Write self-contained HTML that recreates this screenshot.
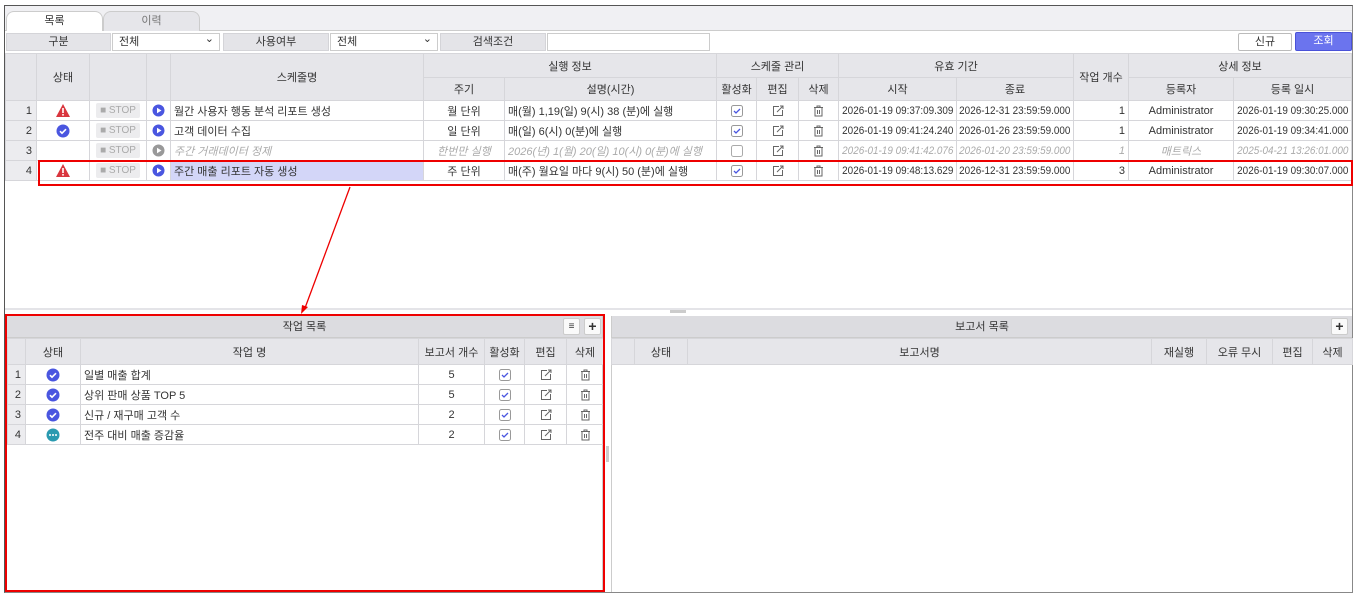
<!DOCTYPE html>
<html><head><meta charset="utf-8"><style>
*{box-sizing:border-box;margin:0;padding:0}
body{width:1355px;height:595px;background:#fff;font-family:"Liberation Sans","Noto Sans CJK KR",sans-serif;font-size:11px;color:#333;position:relative;overflow:hidden}
.a{position:absolute}
.frame{left:4px;top:5px;width:1349px;height:588px;border:1px solid #555;border-right:1px solid #888;border-bottom:1px solid #888;background:#fff}
.tabbar{left:5px;top:6px;width:1347px;height:25px;background:#f0f0f3;border-bottom:1px solid #ccc}
.tab{top:11px;height:20px;border:1px solid #ccc;border-bottom:none;border-radius:8px 8px 0 0;text-align:center;line-height:18px;font-size:11px}
.lbl{top:33px;height:18px;background:#e4e4e8;border:1px solid #d4d4d8;text-align:center;line-height:16px;font-size:11px}
.sel{top:33px;height:18px;border:1px solid #ccc;background:#fff;line-height:16px;padding-left:6px;font-size:11px}
.dd:after{content:"⌄";position:absolute;right:5px;top:-3px;font-size:11px}
table{border-collapse:collapse;table-layout:fixed;position:absolute}
td,th{border:1px solid #d6d6da;height:20px;font-size:11px;font-weight:normal;white-space:nowrap;overflow:hidden;text-align:center;padding:0 3px}
th{background:#e6e6ea;color:#333}
td.l{text-align:left}
td.r{text-align:right}
td.n{background:#ececef;text-align:right;padding-right:4px}
td.d{padding:0;text-align:center}
td.d span{display:inline-block;transform:scaleX(0.9);transform-origin:center;margin:0 -10px}
.g td{color:#aaa;font-style:italic}
.stop{display:inline-block;width:44px;height:15px;background:#ececee;color:#aaa;font-size:10px;line-height:15px;border-radius:2px}
svg{vertical-align:middle}
.ptitle{height:22px;background:#dcdce0;text-align:center;line-height:22px;font-size:11px;border-bottom:1px solid #ccc}
.ib{width:17px;height:17px;border:1px solid #ccc;background:#fafafa;border-radius:2px;font-size:14px;line-height:15px;text-align:center;font-weight:bold}
</style></head><body>
<div class="a frame"></div>
<div class="a tabbar"></div>
<div class="a tab" style="left:6px;width:97px;background:#fff">목록</div>
<div class="a tab" style="left:103px;width:97px;background:#e6e6ea;color:#777">이력</div>
<div class="a lbl" style="left:6px;width:105px">구분</div>
<div class="a sel dd" style="left:112px;width:108px">전체</div>
<div class="a lbl" style="left:223px;width:106px">사용여부</div>
<div class="a sel dd" style="left:330px;width:108px">전체</div>
<div class="a lbl" style="left:440px;width:106px">검색조건</div>
<div class="a sel" style="left:547px;width:163px;padding:0"></div>
<div class="a" style="left:1238px;top:33px;width:54px;height:18px;border:1px solid #bbb;border-radius:2px;background:#fff;text-align:center;line-height:16px">신규</div>
<div class="a" style="left:1295px;top:32px;width:57px;height:19px;border:1px solid #4a52d8;border-radius:2px;background:#6b74ee;color:#fff;text-align:center;line-height:17px">조회</div>

<table style="left:5px;top:53px;width:1346px">
<colgroup><col style="width:31px"><col style="width:53px"><col style="width:57px"><col style="width:24px"><col style="width:253px"><col style="width:81px"><col style="width:212px"><col style="width:40px"><col style="width:42px"><col style="width:40px"><col style="width:118px"><col style="width:117px"><col style="width:55px"><col style="width:105px"><col style="width:118px"></colgroup>
<tr style="height:24px"><th rowspan="2"></th><th rowspan="2">상태</th><th rowspan="2"></th><th rowspan="2"></th><th rowspan="2">스케줄명</th><th colspan="2">실행 정보</th><th colspan="3">스케줄 관리</th><th colspan="2">유효 기간</th><th rowspan="2">작업 개수</th><th colspan="2">상세 정보</th></tr>
<tr style="height:23px"><th>주기</th><th>설명(시간)</th><th>활성화</th><th>편집</th><th>삭제</th><th>시작</th><th>종료</th><th>등록자</th><th>등록 일시</th></tr>
<tr><td class="n">1</td><td><svg width="16" height="15" viewBox="0 0 16 15"><path d="M8 1L15 14H1Z" fill="#d9363e"/><rect x="7.2" y="5" width="1.6" height="5" fill="#fff"/><rect x="7.2" y="11" width="1.6" height="1.6" fill="#fff"/></svg></td><td><span class="stop">■ STOP</span></td><td><svg width="13" height="13"><circle cx="6.5" cy="6.5" r="6" fill="#4a56e0"/><path d="M5 3.8L9.5 6.5L5 9.2Z" fill="#fff"/></svg></td><td class="l">월간 사용자 행동 분석 리포트 생성</td><td>월 단위</td><td class="l">매(월) 1,19(일) 9(시) 38 (분)에 실행</td><td><svg width="12" height="12"><rect x=".5" y=".5" width="11" height="11" rx="2" fill="#fff" stroke="#999"/><path d="M3 6l2 2l4-4" stroke="#4a56e0" fill="none" stroke-width="1.3"/></svg></td><td><svg width="12" height="12"><path d="M7 1.5H1.5V10.5H10.5V5" stroke="#666" fill="none"/><path d="M5 7L11 1M8 1H11V4" stroke="#666" fill="none"/></svg></td><td><svg width="11" height="12"><path d="M1 2.5H10M4 2.5V1H7V2.5M2 3V11H9V3M4.5 5V9M6.5 5V9" stroke="#666" fill="none"/></svg></td><td class="d"><span>2026-01-19 09:37:09.309</span></td><td class="d"><span>2026-12-31 23:59:59.000</span></td><td class="r">1</td><td>Administrator</td><td class="d"><span>2026-01-19 09:30:25.000</span></td></tr>
<tr><td class="n">2</td><td><svg width="14" height="14"><circle cx="7" cy="7" r="6.5" fill="#4a56e0"/><path d="M4 7.2l2 2l4-4" stroke="#fff" fill="none" stroke-width="1.6"/></svg></td><td><span class="stop">■ STOP</span></td><td><svg width="13" height="13"><circle cx="6.5" cy="6.5" r="6" fill="#4a56e0"/><path d="M5 3.8L9.5 6.5L5 9.2Z" fill="#fff"/></svg></td><td class="l">고객 데이터 수집</td><td>일 단위</td><td class="l">매(일) 6(시) 0(분)에 실행</td><td><svg width="12" height="12"><rect x=".5" y=".5" width="11" height="11" rx="2" fill="#fff" stroke="#999"/><path d="M3 6l2 2l4-4" stroke="#4a56e0" fill="none" stroke-width="1.3"/></svg></td><td><svg width="12" height="12"><path d="M7 1.5H1.5V10.5H10.5V5" stroke="#666" fill="none"/><path d="M5 7L11 1M8 1H11V4" stroke="#666" fill="none"/></svg></td><td><svg width="11" height="12"><path d="M1 2.5H10M4 2.5V1H7V2.5M2 3V11H9V3M4.5 5V9M6.5 5V9" stroke="#666" fill="none"/></svg></td><td class="d"><span>2026-01-19 09:41:24.240</span></td><td class="d"><span>2026-01-26 23:59:59.000</span></td><td class="r">1</td><td>Administrator</td><td class="d"><span>2026-01-19 09:34:41.000</span></td></tr>
<tr class="g"><td class="n" style="font-style:normal;color:#333">3</td><td></td><td><span class="stop" style="font-style:normal">■ STOP</span></td><td><svg width="13" height="13"><circle cx="6.5" cy="6.5" r="6" fill="#999"/><path d="M5 3.8L9.5 6.5L5 9.2Z" fill="#fff"/></svg></td><td class="l">주간 거래데이터 정제</td><td>한번만 실행</td><td class="l">2026(년) 1(월) 20(일) 10(시) 0(분)에 실행</td><td><svg width="12" height="12"><rect x=".5" y=".5" width="11" height="11" rx="2" fill="#fff" stroke="#aaa"/></svg></td><td><svg width="12" height="12"><path d="M7 1.5H1.5V10.5H10.5V5" stroke="#666" fill="none"/><path d="M5 7L11 1M8 1H11V4" stroke="#666" fill="none"/></svg></td><td><svg width="11" height="12"><path d="M1 2.5H10M4 2.5V1H7V2.5M2 3V11H9V3M4.5 5V9M6.5 5V9" stroke="#666" fill="none"/></svg></td><td class="d"><span>2026-01-19 09:41:42.076</span></td><td class="d"><span>2026-01-20 23:59:59.000</span></td><td class="r">1</td><td>매트릭스</td><td class="d"><span>2025-04-21 13:26:01.000</span></td></tr>
<tr><td class="n">4</td><td><svg width="16" height="15" viewBox="0 0 16 15"><path d="M8 1L15 14H1Z" fill="#d9363e"/><rect x="7.2" y="5" width="1.6" height="5" fill="#fff"/><rect x="7.2" y="11" width="1.6" height="1.6" fill="#fff"/></svg></td><td><span class="stop">■ STOP</span></td><td><svg width="13" height="13"><circle cx="6.5" cy="6.5" r="6" fill="#4a56e0"/><path d="M5 3.8L9.5 6.5L5 9.2Z" fill="#fff"/></svg></td><td class="l" style="background:#d3d6f8">주간 매출 리포트 자동 생성</td><td>주 단위</td><td class="l">매(주) 월요일 마다 9(시) 50 (분)에 실행</td><td><svg width="12" height="12"><rect x=".5" y=".5" width="11" height="11" rx="2" fill="#fff" stroke="#999"/><path d="M3 6l2 2l4-4" stroke="#4a56e0" fill="none" stroke-width="1.3"/></svg></td><td><svg width="12" height="12"><path d="M7 1.5H1.5V10.5H10.5V5" stroke="#666" fill="none"/><path d="M5 7L11 1M8 1H11V4" stroke="#666" fill="none"/></svg></td><td><svg width="11" height="12"><path d="M1 2.5H10M4 2.5V1H7V2.5M2 3V11H9V3M4.5 5V9M6.5 5V9" stroke="#666" fill="none"/></svg></td><td class="d"><span>2026-01-19 09:48:13.629</span></td><td class="d"><span>2026-12-31 23:59:59.000</span></td><td class="r">3</td><td>Administrator</td><td class="d"><span>2026-01-19 09:30:07.000</span></td></tr>
</table>
<div class="a" style="left:38px;top:160px;width:1315px;height:26px;border:2px solid #e00"></div>

<div class="a" style="left:5px;top:308px;width:1347px;height:2px;background:#e4e4e8"></div>
<div class="a" style="left:670px;top:310px;width:16px;height:3px;background:#ccc"></div>

<div class="a" style="left:7px;top:316px;width:596px;height:274px;border-right:1px solid #ccc">
<div class="ptitle">작업 목록</div>
</div>
<div class="a ib" style="left:563px;top:318px;font-size:10px">≡</div>
<div class="a ib" style="left:584px;top:318px">+</div>
<table style="left:7px;top:338px;width:596px">
<colgroup><col style="width:18px"><col style="width:55px"><col style="width:338px"><col style="width:66px"><col style="width:40px"><col style="width:42px"><col style="width:37px"></colgroup>
<tr style="height:26px"><th></th><th>상태</th><th>작업 명</th><th>보고서 개수</th><th>활성화</th><th>편집</th><th>삭제</th></tr>
<tr><td class="n">1</td><td><svg width="14" height="14"><circle cx="7" cy="7" r="6.5" fill="#4a56e0"/><path d="M4 7.2l2 2l4-4" stroke="#fff" fill="none" stroke-width="1.6"/></svg></td><td class="l">일별 매출 합계</td><td>5</td><td><svg width="12" height="12"><rect x=".5" y=".5" width="11" height="11" rx="2" fill="#fff" stroke="#999"/><path d="M3 6l2 2l4-4" stroke="#4a56e0" fill="none" stroke-width="1.3"/></svg></td><td><svg width="12" height="12"><path d="M7 1.5H1.5V10.5H10.5V5" stroke="#666" fill="none"/><path d="M5 7L11 1M8 1H11V4" stroke="#666" fill="none"/></svg></td><td><svg width="11" height="12"><path d="M1 2.5H10M4 2.5V1H7V2.5M2 3V11H9V3M4.5 5V9M6.5 5V9" stroke="#666" fill="none"/></svg></td></tr>
<tr><td class="n">2</td><td><svg width="14" height="14"><circle cx="7" cy="7" r="6.5" fill="#4a56e0"/><path d="M4 7.2l2 2l4-4" stroke="#fff" fill="none" stroke-width="1.6"/></svg></td><td class="l">상위 판매 상품 TOP 5</td><td>5</td><td><svg width="12" height="12"><rect x=".5" y=".5" width="11" height="11" rx="2" fill="#fff" stroke="#999"/><path d="M3 6l2 2l4-4" stroke="#4a56e0" fill="none" stroke-width="1.3"/></svg></td><td><svg width="12" height="12"><path d="M7 1.5H1.5V10.5H10.5V5" stroke="#666" fill="none"/><path d="M5 7L11 1M8 1H11V4" stroke="#666" fill="none"/></svg></td><td><svg width="11" height="12"><path d="M1 2.5H10M4 2.5V1H7V2.5M2 3V11H9V3M4.5 5V9M6.5 5V9" stroke="#666" fill="none"/></svg></td></tr>
<tr><td class="n">3</td><td><svg width="14" height="14"><circle cx="7" cy="7" r="6.5" fill="#4a56e0"/><path d="M4 7.2l2 2l4-4" stroke="#fff" fill="none" stroke-width="1.6"/></svg></td><td class="l">신규 / 재구매 고객 수</td><td>2</td><td><svg width="12" height="12"><rect x=".5" y=".5" width="11" height="11" rx="2" fill="#fff" stroke="#999"/><path d="M3 6l2 2l4-4" stroke="#4a56e0" fill="none" stroke-width="1.3"/></svg></td><td><svg width="12" height="12"><path d="M7 1.5H1.5V10.5H10.5V5" stroke="#666" fill="none"/><path d="M5 7L11 1M8 1H11V4" stroke="#666" fill="none"/></svg></td><td><svg width="11" height="12"><path d="M1 2.5H10M4 2.5V1H7V2.5M2 3V11H9V3M4.5 5V9M6.5 5V9" stroke="#666" fill="none"/></svg></td></tr>
<tr><td class="n">4</td><td><svg width="14" height="14"><circle cx="7" cy="7" r="6.5" fill="#2a9ab0"/><circle cx="4" cy="7" r="1" fill="#fff"/><circle cx="7" cy="7" r="1" fill="#fff"/><circle cx="10" cy="7" r="1" fill="#fff"/></svg></td><td class="l">전주 대비 매출 증감율</td><td>2</td><td><svg width="12" height="12"><rect x=".5" y=".5" width="11" height="11" rx="2" fill="#fff" stroke="#999"/><path d="M3 6l2 2l4-4" stroke="#4a56e0" fill="none" stroke-width="1.3"/></svg></td><td><svg width="12" height="12"><path d="M7 1.5H1.5V10.5H10.5V5" stroke="#666" fill="none"/><path d="M5 7L11 1M8 1H11V4" stroke="#666" fill="none"/></svg></td><td><svg width="11" height="12"><path d="M1 2.5H10M4 2.5V1H7V2.5M2 3V11H9V3M4.5 5V9M6.5 5V9" stroke="#666" fill="none"/></svg></td></tr>
</table>
<div class="a" style="left:5px;top:314px;width:600px;height:278px;border:2px solid #e00"></div>
<div class="a" style="left:606px;top:446px;width:3px;height:16px;background:#ccc"></div>

<div class="a" style="left:611px;top:316px;width:741px;height:276px;border-left:1px solid #ccc">
<div class="ptitle">보고서 목록</div>
</div>
<div class="a ib" style="left:1331px;top:318px">+</div>
<table style="left:611px;top:338px;width:741px">
<colgroup><col style="width:23px"><col style="width:53px"><col style="width:464px"><col style="width:55px"><col style="width:66px"><col style="width:40px"><col style="width:40px"></colgroup>
<tr style="height:26px"><th></th><th>상태</th><th>보고서명</th><th>재실행</th><th>오류 무시</th><th>편집</th><th>삭제</th></tr>
</table>

<svg class="a" style="left:0;top:0" width="1355" height="595"><line x1="350" y1="187" x2="305" y2="308" stroke="#e00" stroke-width="1.3"/><path d="M301 314L302 305L308 307Z" fill="#e00"/></svg>
</body></html>
